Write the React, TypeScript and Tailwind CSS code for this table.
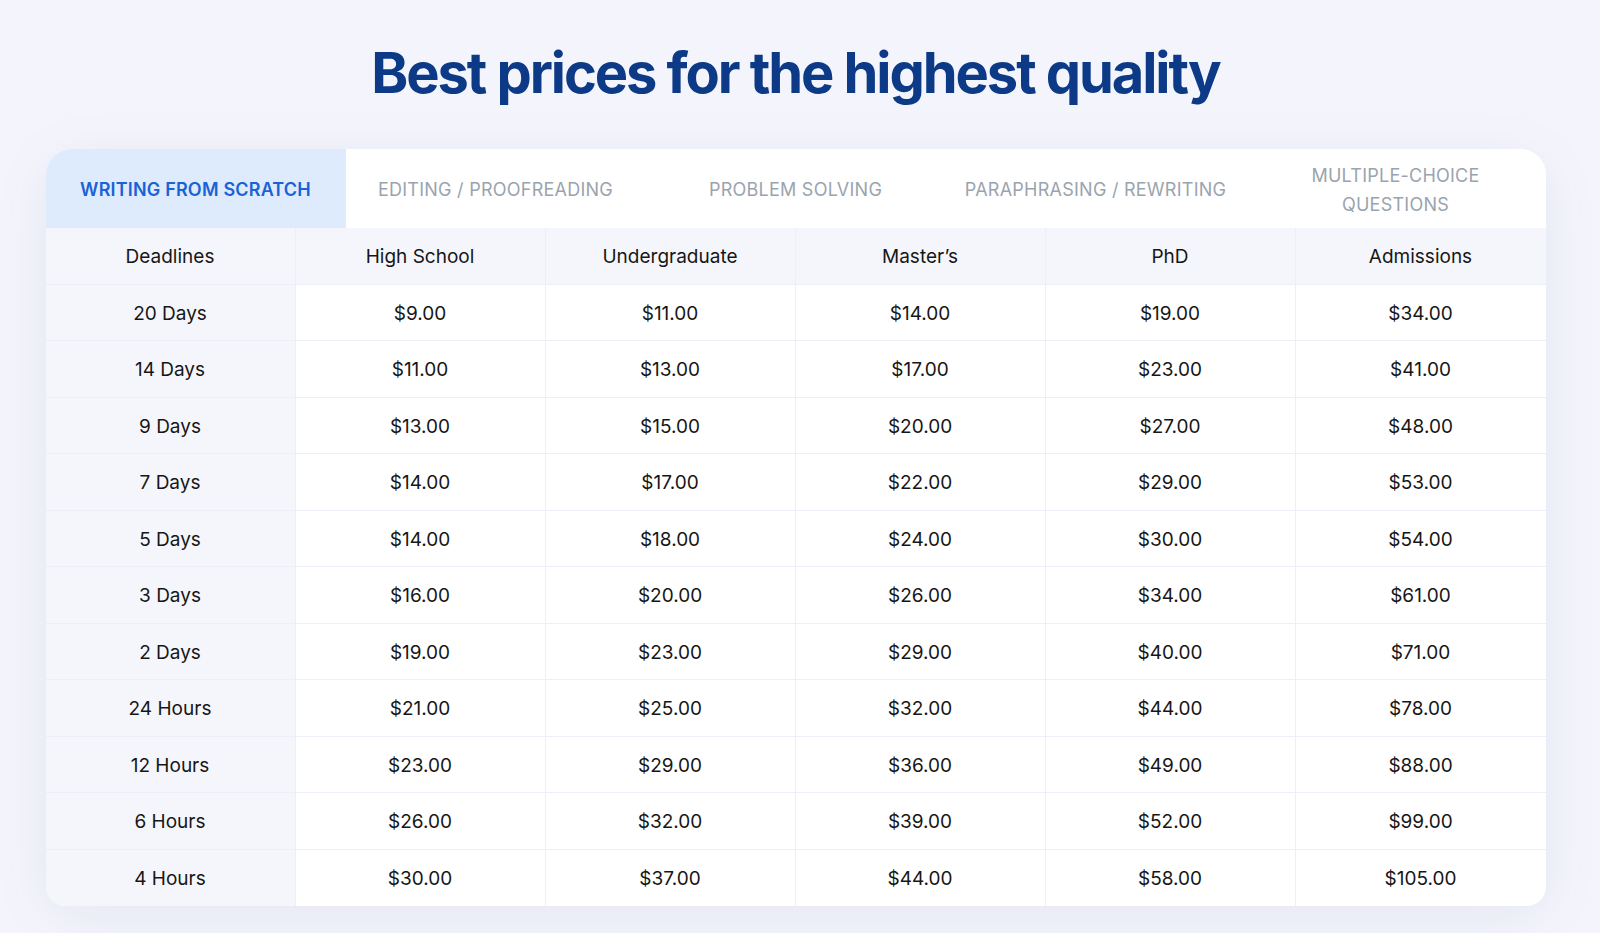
import React from "react";

const tabs = [
  "WRITING FROM SCRATCH",
  "EDITING / PROOFREADING",
  "PROBLEM SOLVING",
  "PARAPHRASING / REWRITING",
  "MULTIPLE-CHOICE QUESTIONS",
];

const headers = ["Deadlines", "High School", "Undergraduate", "Master’s", "PhD", "Admissions"];

const rows: string[][] = [
  ["20 Days", "$9.00", "$11.00", "$14.00", "$19.00", "$34.00"],
  ["14 Days", "$11.00", "$13.00", "$17.00", "$23.00", "$41.00"],
  ["9 Days", "$13.00", "$15.00", "$20.00", "$27.00", "$48.00"],
  ["7 Days", "$14.00", "$17.00", "$22.00", "$29.00", "$53.00"],
  ["5 Days", "$14.00", "$18.00", "$24.00", "$30.00", "$54.00"],
  ["3 Days", "$16.00", "$20.00", "$26.00", "$34.00", "$61.00"],
  ["2 Days", "$19.00", "$23.00", "$29.00", "$40.00", "$71.00"],
  ["24 Hours", "$21.00", "$25.00", "$32.00", "$44.00", "$78.00"],
  ["12 Hours", "$23.00", "$29.00", "$36.00", "$49.00", "$88.00"],
  ["6 Hours", "$26.00", "$32.00", "$39.00", "$52.00", "$99.00"],
  ["4 Hours", "$30.00", "$37.00", "$44.00", "$58.00", "$105.00"],
];

export default function App() {
  return (
    <div
      className="min-h-[933px] w-full bg-[#f4f5fc] pt-[45px]"
      style={{ fontFamily: "Inter, 'Noto Sans', sans-serif" }}
    >
      <div className="ml-[45.5px] w-[1500px]">
        <h1 className="text-center text-[56px] font-bold leading-[56px] tracking-[-0.037em] text-[#0c3a87]">
          Best prices for the highest quality
        </h1>
        <div className="mt-[48px] w-[1500px] overflow-hidden rounded-t-[26px] rounded-b-[20px] bg-white shadow-[0_10px_60px_rgba(30,40,110,0.07)]">
          <div className="flex h-[79px]">
            {tabs.map((t, i) => (
              <div
                key={t}
                className={
                  i === 0
                    ? "flex w-[300px] items-center justify-center whitespace-nowrap bg-[#deebfd] pt-[4px] text-center text-[18px] font-semibold leading-[28.5px] tracking-[0.01em] text-[#1a62d6]"
                    : i === 4
                    ? "flex w-[300px] items-center justify-center bg-white px-[50px] pt-[4px] text-center text-[18px] font-normal leading-[28.5px] tracking-[0.25px] text-[#9aa4ae]"
                    : "flex w-[300px] items-center justify-center whitespace-nowrap bg-white pt-[4px] text-center text-[18px] font-normal leading-[28.5px] tracking-[0.25px] text-[#9aa4ae]"
                }
              >
                {t}
              </div>
            ))}
          </div>
          <div className="grid grid-cols-6">
            {headers.map((h, i) => (
              <div
                key={h}
                className={
                  "flex h-[56.5px] items-center justify-center border-b border-[#eceef8] bg-[#f5f6fc] pt-[2px] text-[19px] text-[#161616] " +
                  (i < 5 ? "border-r" : "")
                }
              >
                {h}
              </div>
            ))}
            {rows.map((r, ri) =>
              r.map((c, ci) => (
                <div
                  key={ri + "-" + ci}
                  className={
                    "flex h-[56.5px] items-center justify-center border-[#eceef8] pt-[3px] text-[19px] text-[#161616] " +
                    (ci === 0 ? "bg-[#f5f6fc] " : "bg-white ") +
                    (ci < 5 ? "border-r " : "") +
                    (ri < rows.length - 1 ? "border-b" : "")
                  }
                >
                  {c}
                </div>
              ))
            )}
          </div>
        </div>
      </div>
    </div>
  );
}
